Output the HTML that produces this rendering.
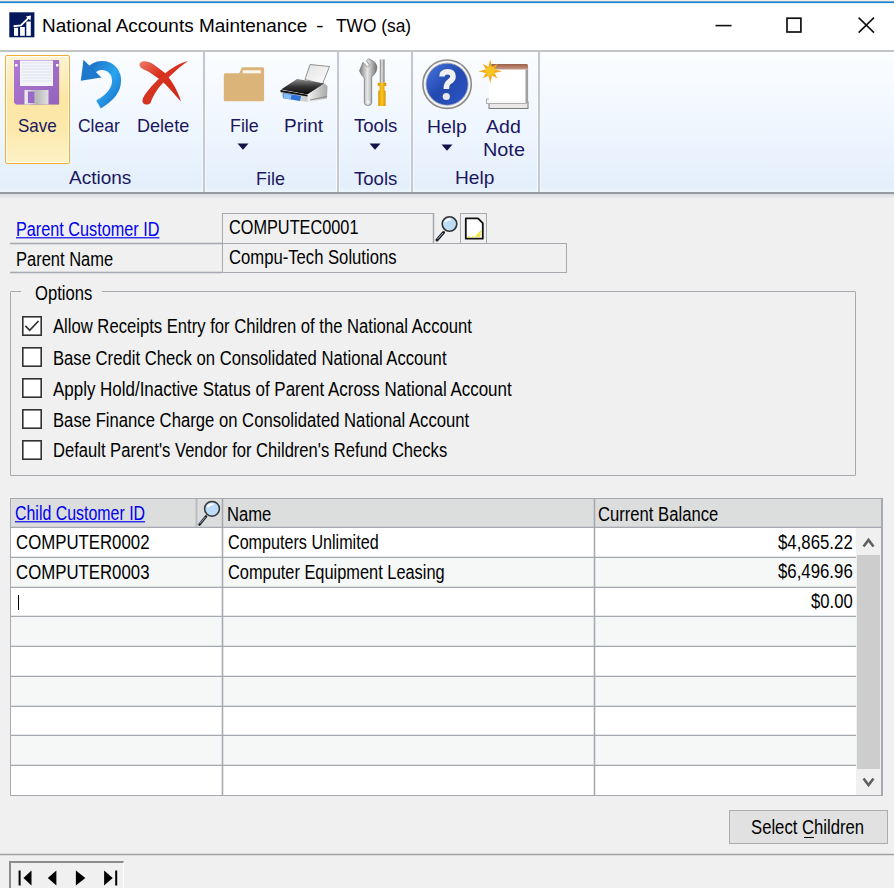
<!DOCTYPE html>
<html><head><meta charset="utf-8">
<style>
*{box-sizing:border-box;margin:0;padding:0}
html,body{width:894px;height:888px;overflow:hidden;background:#f0f0f0;font-family:"Liberation Sans",sans-serif;color:#000}
.a{position:absolute}
.t{position:absolute;white-space:pre;line-height:1;transform-origin:0 0}
#title{left:0;top:0;width:894px;height:50px;background:#fff}
#ribbon{left:0;top:50px;width:894px;height:144px;background:linear-gradient(#fbfdff 0%,#f6faff 25%,#edf5fe 60%,#e4effc 96%,#edf6fe 100%);border-top:2px solid #c0c3c8;border-bottom:2px solid #969ba1}
#rshadow{left:0;top:194px;width:894px;height:5px;background:linear-gradient(#d8dadd,#f0f0f0)}
.sep{position:absolute;top:52px;width:2px;height:140px;background:#c4c8d0;box-shadow:-1px 0 0 #f8fbff,1px 0 0 #f6faff}
.hl{position:absolute;height:1px;background:#a7a9b0;box-shadow:0 -1px 0 rgba(167,169,176,0.28),0 1px 0 rgba(167,169,176,0.28)}
.vl{position:absolute;width:1px;background:#a7a9b0;box-shadow:-1px 0 0 rgba(167,169,176,0.28),1px 0 0 rgba(167,169,176,0.28)}
.cb{position:absolute;left:22px;width:20px;height:20px;border:2px solid #333;background:#fff}
</style></head><body>
<div id="title" class="a">
  <div class="a" style="left:0;top:0;width:894px;height:1px;background:#f6eee0"></div>
  <div class="a" style="left:0;top:1px;width:894px;height:1px;background:#6aa8dc"></div><div class="a" style="left:0;top:2px;width:894px;height:1px;background:#1a84d8"></div><div class="a" style="left:0;top:3px;width:894px;height:1px;background:#e6f1fa"></div>
  <svg class="a" style="left:9px;top:12px" width="26" height="26" viewBox="0 0 26 26">
    <rect x="0.3" y="0.3" width="25.1" height="25" fill="#03175a"/>
    <rect x="5" y="15.8" width="4.1" height="8" fill="#fff"/>
    <rect x="11.1" y="15" width="4.7" height="8.8" fill="#fff"/>
    <rect x="17.3" y="9.5" width="4.5" height="14.3" fill="#fff"/>
    <path d="M4.6 14.2 L11.9 13.4 L19.8 5.6" stroke="#fff" stroke-width="1.9" fill="none"/>
    <path d="M22 3.4 L16.8 4.4 L21.5 8.6 Z" fill="#fff"/>
  </svg>
  <svg class="a" style="left:700px;top:0" width="194" height="50" viewBox="0 0 194 50">
  <path d="M15.5 25.6 H31.5" stroke="#111" stroke-width="1.6"/>
  <rect x="87" y="18.2" width="13.9" height="13.8" fill="none" stroke="#111" stroke-width="1.7"/>
  <path d="M158.6 17.6 L174 32.6 M174 17.6 L158.6 32.6" stroke="#111" stroke-width="1.6"/>
</svg>
  
  
</div>
<div id="ribbon" class="a"></div><div id="rshadow" class="a"></div>
<!-- Save highlighted -->
<div class="a" style="left:5px;top:55px;width:65px;height:109px;border:1px solid #f0ae38;border-radius:2px;box-shadow:inset 0 0 0 1px rgba(255,255,255,0.85);background:linear-gradient(#fdf3d2 0%,#fce6a2 40%,#fce9ad 70%,#fdf2c6 100%)"></div>
<div class="sep" style="left:203px"></div>
<div class="sep" style="left:337px"></div>
<div class="sep" style="left:411px"></div>
<div class="sep" style="left:537.5px"></div>


<!-- ribbon icons -->
<svg class="a" style="left:8px;top:54px" width="60" height="60" viewBox="0 0 60 60">
  <defs>
    <linearGradient id="flp" x1="0" y1="0" x2="1" y2="1"><stop offset="0" stop-color="#b07ad6"/><stop offset="1" stop-color="#9462bc"/></linearGradient>
    <linearGradient id="met" x1="0" y1="0" x2="1" y2="0"><stop offset="0" stop-color="#f0f0f0"/><stop offset="0.5" stop-color="#b8b8b8"/><stop offset="1" stop-color="#e0e0e0"/></linearGradient>
  </defs>
  <rect x="7.5" y="6.5" width="44" height="44" rx="1" fill="#000" opacity="0.15"/>
  <path d="M6 6 H51 V50.5 H8 L6 48.5 Z" fill="url(#flp)"/>
  <rect x="12" y="6.5" width="33" height="25.5" fill="#f3f5fa"/>
  <g stroke="#d8dde8" stroke-width="0.7"><line x1="14" y1="9" x2="44" y2="9"/><line x1="14" y1="12" x2="44" y2="12"/><line x1="14" y1="15" x2="44" y2="15"/><line x1="14" y1="18" x2="44" y2="18"/><line x1="14" y1="21" x2="44" y2="21"/><line x1="14" y1="24" x2="44" y2="24"/><line x1="14" y1="27" x2="44" y2="27"/></g>
  <rect x="16.5" y="36" width="24" height="14.5" fill="url(#met)"/>
  <rect x="20" y="37.5" width="6.5" height="11.5" fill="#9a68c8"/>
  <rect x="7" y="10" width="2.5" height="2.5" fill="#fff"/><rect x="48" y="10" width="2.5" height="2.5" fill="#fff"/>
</svg>
<svg class="a" style="left:74px;top:54px" width="60" height="60" viewBox="0 0 60 60">
  <defs><linearGradient id="blu" x1="0" y1="0" x2="1" y2="1"><stop offset="0" stop-color="#1f70c4"/><stop offset="0.55" stop-color="#2ba4ee"/><stop offset="1" stop-color="#1a74cc"/></linearGradient></defs>
  <path d="M14.4 21 A14.5 14.5 0 0 1 42.5 27 Q42.5 40 24.5 50.5" stroke="url(#blu)" stroke-width="9" fill="none"/>
  <path d="M9.5 5.7 L6.8 26.7 L27.4 23.6 Z" fill="#1e78cc"/>
</svg>
<svg class="a" style="left:134px;top:54px" width="60" height="60" viewBox="0 0 60 60">
  <defs><linearGradient id="red" x1="0" y1="0" x2="1" y2="1"><stop offset="0" stop-color="#ee7a68"/><stop offset="0.4" stop-color="#d8301c"/><stop offset="1" stop-color="#cc2a1a"/></linearGradient></defs>
  <path d="M5.5 10 C7 6 13 6.5 19 10 L31 19 C38 27 44 37 47 47.5 C40 40 33 31 26 25.5 L15 18 C10 15.5 5 14 5.5 10 Z" fill="url(#red)"/>
  <path d="M54 7 C45 9 36 15 28 22 C18 31 10 40 8.5 46 C8 50.5 13 52 16.5 49 C19 41 26 31 33 25 C41 17 48 11 54 7 Z" fill="#d63420"/>
</svg>
<svg class="a" style="left:216px;top:54px" width="60" height="60" viewBox="0 0 60 60">
  <path d="M23.3 19.3 L26 13.2 H46.5 Q48.1 13.2 48.1 14.8 V45.7 Q48.1 47.3 46.5 47.3 H9.4 Q7.8 47.3 7.8 45.7 V20.9 Q7.8 19.3 9.4 19.3 Z" fill="#dab478"/>
  <rect x="26.7" y="16.3" width="18.2" height="3" fill="#fbf6ee"/>
</svg>
<svg class="a" style="left:274px;top:54px" width="60" height="60" viewBox="0 0 60 60">
  <defs>
    <linearGradient id="pap" x1="0" y1="0" x2="1" y2="1"><stop offset="0" stop-color="#e2e2e2"/><stop offset="1" stop-color="#fdfdfd"/></linearGradient>
    <linearGradient id="ptop" x1="0" y1="0" x2="0" y2="1"><stop offset="0" stop-color="#8a8a8a"/><stop offset="0.5" stop-color="#333"/><stop offset="1" stop-color="#0a0a0a"/></linearGradient>
    <linearGradient id="pside" x1="0" y1="0" x2="1" y2="0"><stop offset="0" stop-color="#f4f4f4"/><stop offset="1" stop-color="#a8a8a8"/></linearGradient>
  </defs>
  <path d="M36 10.5 L55.5 12.5 L48.5 30 L31 25.5 Z" fill="url(#pap)" stroke="#888" stroke-width="0.9"/>
  <path d="M7 35.5 L23 25 L50.5 29.5 L33.5 40.5 Z" fill="url(#ptop)"/>
  <path d="M33.5 40.5 L50.5 29.5 L53.5 32 L53 44.5 L34 48 Z" fill="url(#pside)"/>
  <path d="M6 36 L33.5 40.5 L34 48 L9 44.5 Z" fill="#d0d0d0"/>
  <path d="M6.5 36 L33.5 40.8 L33.5 42.5 L6.5 38 Z" fill="#111"/>
  <path d="M9.5 39 L27 42 L26 47 L9 44 Z" fill="#2f72d8"/>
  <path d="M10 39.5 L17.5 40.8 L16.8 45.5 L9.5 44.2 Z" fill="#86bff5"/>
  <path d="M36 46 L52.5 42.5" stroke="#777" stroke-width="0.8"/>
</svg>
<svg class="a" style="left:344px;top:54px" width="60" height="60" viewBox="0 0 60 60">
  <defs>
    <linearGradient id="wr" x1="0" y1="0" x2="1" y2="0"><stop offset="0" stop-color="#7a7a7a"/><stop offset="0.45" stop-color="#e8e8e8"/><stop offset="1" stop-color="#707070"/></linearGradient>
    <linearGradient id="yl" x1="0" y1="0" x2="1" y2="0"><stop offset="0" stop-color="#d89000"/><stop offset="0.5" stop-color="#fcc820"/><stop offset="1" stop-color="#d08800"/></linearGradient>
  </defs>
  <path d="M20.3 24 V48.5 Q20.3 51.5 24 51.5 Q27.7 51.5 27.7 48.5 V23 Q33.2 18.5 33 13 Q32 7 24.5 5 L22.5 6.8 L25.5 11.2 L23.5 13.2 L19 8.3 L15.5 16.8 Q17 21 20.3 24 Z" fill="url(#wr)" stroke="#707070" stroke-width="0.7"/><rect x="22.6" y="46.5" width="2.8" height="3" rx="1.2" fill="#f0f0f0"/>
  <rect x="35.8" y="5.4" width="4.7" height="23.5" fill="url(#wr)"/>
  <path d="M33.8 28.7 H42.2 V32 H40.5 V36.5 H41.6 V52 H34.2 V36.5 H35.5 V32 H33.8 Z" fill="url(#yl)"/>
</svg>
<svg class="a" style="left:414px;top:54px" width="60" height="60" viewBox="0 0 60 60">
  <defs>
    <linearGradient id="hb" x1="0" y1="0" x2="1" y2="1"><stop offset="0" stop-color="#4678e0"/><stop offset="0.5" stop-color="#2448b0"/><stop offset="1" stop-color="#2c58c8"/></linearGradient>
  </defs>
  <circle cx="33.1" cy="30.2" r="24.2" fill="#f4f4f4" stroke="#8a8a8a" stroke-width="1.6"/>
  <circle cx="33.1" cy="30.2" r="21" fill="url(#hb)" stroke="#9aa0b0" stroke-width="0.8"/>
  <path d="M28 22.5 Q28 17.8 33.8 17.8 Q39 17.8 39 22.5 Q39 25.5 35.5 27.5 Q32.3 29.5 32.3 35" stroke="#f0f0f0" stroke-width="5.6" fill="none"/>
  <circle cx="32.3" cy="42.5" r="3.6" fill="#e8e8e8"/>
</svg>
<svg class="a" style="left:472px;top:54px" width="60" height="60" viewBox="0 0 60 60">
  <defs><linearGradient id="br" x1="0" y1="0" x2="0" y2="1"><stop offset="0" stop-color="#9c6048"/><stop offset="1" stop-color="#c89a88"/></linearGradient></defs>
  <rect x="17" y="48" width="39" height="6.5" fill="#e8e8e8" stroke="#7a7a7a" stroke-width="1"/>
  <rect x="14.5" y="45" width="40" height="4.5" fill="#f8f8f8" stroke="#a0a0a0" stroke-width="0.8"/>
  <rect x="17" y="15.5" width="37" height="31" fill="#fff"/>
  <rect x="53.5" y="15.5" width="2.6" height="33" fill="#a0a0a0"/>
  <path d="M17 10.1 H54.5 Q56.1 10.1 56.1 12 V15.5 H17 Z" fill="url(#br)"/>
  <g transform="translate(18.2 17.2)" fill="#f2a81a"><path d="M0.00 -12.00 L1.76 -4.25 L7.42 -7.42 L4.25 -1.76 L12.00 0.00 L4.25 1.76 L7.42 7.42 L1.76 4.25 L0.00 12.00 L-1.76 4.25 L-7.42 7.42 L-4.25 1.76 L-12.00 0.00 L-4.25 -1.76 L-7.42 -7.42 L-1.76 -4.25 Z"/><circle r="4.8" fill="#fac41e"/></g>
</svg>

<svg class="a" style="left:237px;top:143px" width="12" height="7" viewBox="0 0 12 7"><path d="M0.5 0.5 H11.5 L6 6.8 Z" fill="#15124a"/></svg>
<svg class="a" style="left:369px;top:143px" width="12" height="7" viewBox="0 0 12 7"><path d="M0.5 0.5 H11.5 L6 6.8 Z" fill="#15124a"/></svg>
<svg class="a" style="left:440.5px;top:143.5px" width="12" height="7" viewBox="0 0 12 7"><path d="M0.5 0.5 H11.5 L6 6.8 Z" fill="#15124a"/></svg>
<!-- lookup/note buttons -->
<div class="vl" style="left:433px;top:213px;height:30px"></div>
<div class="a" style="left:460px;top:213px;width:27px;height:30px;border:1px solid #a7a9b0;border-bottom:none"></div>
<svg class="a" style="left:434px;top:214px" width="26" height="28" viewBox="0 0 26 28">
  <path d="M3 26 L9.5 18.5" stroke="#222" stroke-width="3" stroke-linecap="round"/>
  <path d="M3.5 25 L9 19" stroke="#8ab0e0" stroke-width="1"/>
  <circle cx="15.5" cy="10" r="7.3" fill="#bcdcf8" stroke="#333" stroke-width="1.6"/>
  <path d="M11 8 Q13 5 17 5.5" stroke="#fff" stroke-width="1.8" fill="none"/>
</svg>
<svg class="a" style="left:462px;top:215px" width="24" height="26" viewBox="0 0 24 26">
  <path d="M3.8 3.4 H16 L20.8 8.2 V23.7 H3.8 Z" fill="#fff" stroke="#111" stroke-width="1.8" stroke-linejoin="round"/>
  <path d="M6 22 H8 M10 22 H12 M14 22 L19 16 M16 22 L19 19" stroke="#f0e020" stroke-width="1.4"/>
</svg>

<!-- form -->
<div class="hl" style="left:10px;top:243px;width:212px"></div>
<div class="hl" style="left:10px;top:272px;width:212px"></div>
<div class="a" style="left:222px;top:213px;width:212px;height:30px;border:1px solid #a7a9b0;border-bottom:none"></div>
<div class="a" style="left:222px;top:243px;width:345px;height:30px;border:1px solid #a7a9b0"></div>

<!-- options -->
<div class="a" style="left:10px;top:291px;width:846px;height:185px;border:1px solid #a7a9b0;border-radius:1px"></div>
<div class="a" style="left:21px;top:285px;width:81px;height:12px;background:#f0f0f0"></div>
<svg class="a" style="left:22px;top:316px" width="20" height="20" viewBox="0 0 20 20"><rect x="0.8" y="0.8" width="18.4" height="18.4" fill="#fff" stroke="#333" stroke-width="1.6"/></svg>
<svg class="a" style="left:22px;top:347px" width="20" height="20" viewBox="0 0 20 20"><rect x="0.8" y="0.8" width="18.4" height="18.4" fill="#fff" stroke="#333" stroke-width="1.6"/></svg>
<svg class="a" style="left:22px;top:378px" width="20" height="20" viewBox="0 0 20 20"><rect x="0.8" y="0.8" width="18.4" height="18.4" fill="#fff" stroke="#333" stroke-width="1.6"/></svg>
<svg class="a" style="left:22px;top:409px" width="20" height="20" viewBox="0 0 20 20"><rect x="0.8" y="0.8" width="18.4" height="18.4" fill="#fff" stroke="#333" stroke-width="1.6"/></svg>
<svg class="a" style="left:22px;top:440px" width="20" height="20" viewBox="0 0 20 20"><rect x="0.8" y="0.8" width="18.4" height="18.4" fill="#fff" stroke="#333" stroke-width="1.6"/></svg>
<svg class="a" style="left:22px;top:316px" width="20" height="20" viewBox="0 0 20 20"><path d="M3.4 9.9 L7.7 14.3 L16.5 5" stroke="#333" stroke-width="1.8" fill="none"/></svg>

<!-- grid -->
<div class="a" style="left:10px;top:498px;width:873px;height:298px;background:#fff;border:1px solid #a7a9b0;border-right:2px solid #a7a9b0;border-bottom:2px solid #a7a9b0"></div>
<div class="a" style="left:11px;top:499px;width:870px;height:28px;background:#dcdddd"></div>
<div class="hl" style="left:11px;top:527px;width:870px"></div>
<div class="a" style="left:11px;top:528px;width:845px;height:29px;background:#fff"></div>
<div class="hl" style="left:11px;top:557px;width:845px"></div>
<div class="a" style="left:11px;top:558px;width:845px;height:29px;background:#f6f8f8"></div>
<div class="hl" style="left:11px;top:587px;width:845px"></div>
<div class="a" style="left:11px;top:588px;width:845px;height:28px;background:#fff"></div>
<div class="hl" style="left:11px;top:616px;width:845px"></div>
<div class="a" style="left:11px;top:617px;width:845px;height:29px;background:#f6f8f8"></div>
<div class="hl" style="left:11px;top:646px;width:845px"></div>
<div class="a" style="left:11px;top:647px;width:845px;height:29px;background:#fff"></div>
<div class="hl" style="left:11px;top:676px;width:845px"></div>
<div class="a" style="left:11px;top:677px;width:845px;height:29px;background:#f6f8f8"></div>
<div class="hl" style="left:11px;top:706px;width:845px"></div>
<div class="a" style="left:11px;top:707px;width:845px;height:28px;background:#fff"></div>
<div class="hl" style="left:11px;top:735px;width:845px"></div>
<div class="a" style="left:11px;top:736px;width:845px;height:29px;background:#f6f8f8"></div>
<div class="hl" style="left:11px;top:765px;width:845px"></div>
<div class="a" style="left:11px;top:766px;width:845px;height:29px;background:#fff"></div>
<div class="vl" style="left:222px;top:499px;height:296px"></div>
<div class="vl" style="left:594px;top:499px;height:296px"></div>
<div class="vl" style="left:196px;top:499px;height:28px;background:#b8b9bc"></div>
<div class="a" style="left:856px;top:528px;width:25px;height:267px;background:#f0f0f0"></div>
<div class="a" style="left:857px;top:555px;width:23px;height:214px;background:#cdcdcd"></div>
<svg class="a" style="left:862px;top:537px" width="13" height="11" viewBox="0 0 13 11"><path d="M1.5 9.5 L6.5 3 L11.5 9.5" stroke="#606060" stroke-width="2.6" fill="none"/></svg>
<svg class="a" style="left:862px;top:777px" width="13" height="11" viewBox="0 0 13 11"><path d="M1.5 1.5 L6.5 8 L11.5 1.5" stroke="#606060" stroke-width="2.6" fill="none"/></svg>
<div class="a" style="left:18px;top:595px;width:1px;height:15px;background:#000"></div>


<svg class="a" style="left:196px;top:499px" width="26" height="28" viewBox="0 0 26 28">
  <path d="M3.5 25.5 L10 17.5" stroke="#222" stroke-width="2.6" stroke-linecap="round"/>
  <path d="M4 24.5 L9.5 18" stroke="#8ab0e0" stroke-width="0.9"/>
  <circle cx="16" cy="9.8" r="7.4" fill="#bcdcf8" stroke="#333" stroke-width="1.5"/>
  <path d="M11.5 8 Q13.5 5 17.5 5.5" stroke="#fff" stroke-width="1.8" fill="none"/>
</svg>
<!-- nav -->
<div class="a" style="left:9px;top:861px;width:115px;height:27px;border-top:2px solid #8c8c8c;border-left:2px solid #8c8c8c;border-right:1px solid #fff"></div>
<svg class="a" style="left:10px;top:862px" width="114" height="26" viewBox="0 0 114 26">
  <rect x="8.6" y="8.5" width="2" height="15" fill="#000"/>
  <path d="M21.5 8.5 V23.5 L13.5 16 Z" fill="#000"/>
  <path d="M46.4 8.5 V23.5 L37.8 16 Z" fill="#000"/>
  <path d="M65.9 8.5 V23.5 L75.3 16 Z" fill="#000"/>
  <path d="M94.1 8.5 V23.5 L102.7 16 Z" fill="#000"/>
  <rect x="105.2" y="8.5" width="2" height="15" fill="#000"/>
</svg>
<!-- bottom -->
<div class="a" style="left:729px;top:810px;width:159px;height:34px;border:1px solid #adadad;background:#e1e1e1"></div>
<div class="a" style="left:804px;top:837px;width:10px;height:1px;background:#000"></div>
<div class="hl" style="left:0;top:854px;width:894px;background:#a0a0a0"></div>

<div class="t" style="left:42.29px;top:17.02px;font-size:17px;color:#000;transform:scale(1.1143,1.0882);">National Accounts Maintenance</div>
<div class="t" style="left:316.25px;top:17.02px;font-size:17px;color:#000;transform:scale(1.3500,1.0882);">-</div>
<div class="t" style="left:336.00px;top:17.02px;font-size:17px;color:#000;transform:scale(1.0192,1.0882);">TWO (sa)</div>
<div class="t" style="left:18.40px;top:116.44px;font-size:17px;color:#1b1760;transform:scale(1.0027,1.1294);">Save</div>
<div class="t" style="left:77.87px;top:116.44px;font-size:17px;color:#1b1760;transform:scale(1.0275,1.1294);">Clear</div>
<div class="t" style="left:136.94px;top:116.44px;font-size:17px;color:#1b1760;transform:scale(1.0625,1.1294);">Delete</div>
<div class="t" style="left:229.65px;top:116.44px;font-size:17px;color:#1b1760;transform:scale(1.0500,1.1294);">File</div>
<div class="t" style="left:284.38px;top:116.44px;font-size:17px;color:#1b1760;transform:scale(1.1176,1.1294);">Print</div>
<div class="t" style="left:354.00px;top:116.44px;font-size:17px;color:#1b1760;transform:scale(1.0923,1.1294);">Tools</div>
<div class="t" style="left:426.56px;top:116.74px;font-size:17px;color:#1b1760;transform:scale(1.1394,1.1294);">Help</div>
<div class="t" style="left:486.30px;top:116.74px;font-size:17px;color:#1b1760;transform:scale(1.1483,1.1294);">Add</div>
<div class="t" style="left:482.63px;top:140.14px;font-size:17px;color:#1b1760;transform:scale(1.1676,1.1294);">Note</div>
<div class="t" style="left:69.30px;top:168.34px;font-size:17px;color:#1b1760;transform:scale(1.1182,1.1294);">Actions</div>
<div class="t" style="left:255.95px;top:168.74px;font-size:17px;color:#1b1760;transform:scale(1.0538,1.1294);">File</div>
<div class="t" style="left:354.00px;top:168.74px;font-size:17px;color:#1b1760;transform:scale(1.0923,1.1294);">Tools</div>
<div class="t" style="left:454.67px;top:168.14px;font-size:17px;color:#1b1760;transform:scale(1.1273,1.1294);">Help</div>
<div class="t" style="left:15.80px;top:220.41px;font-size:17px;color:#0000f0;transform:scale(0.9547,1.1471);text-decoration:underline">Parent Customer ID</div>
<div class="t" style="left:15.73px;top:249.71px;font-size:17px;color:#000;transform:scale(0.9697,1.1471);">Parent Name</div>
<div class="t" style="left:229.44px;top:218.01px;font-size:17px;color:#000;transform:scale(0.9582,1.1471);">COMPUTEC0001</div>
<div class="t" style="left:229.42px;top:248.21px;font-size:17px;color:#000;transform:scale(0.9794,1.1471);">Compu-Tech Solutions</div>
<div class="t" style="left:34.52px;top:284.31px;font-size:17px;color:#000;transform:scale(0.9772,1.1471);">Options</div>
<div class="t" style="left:53.00px;top:317.11px;font-size:17px;color:#000;transform:scale(0.9785,1.1471);">Allow Receipts Entry for Children of the National Account</div>
<div class="t" style="left:53.22px;top:348.51px;font-size:17px;color:#000;transform:scale(0.9798,1.1471);">Base Credit Check on Consolidated National Account</div>
<div class="t" style="left:53.00px;top:379.71px;font-size:17px;color:#000;transform:scale(0.9967,1.1471);">Apply Hold/Inactive Status of Parent Across National Account</div>
<div class="t" style="left:53.22px;top:410.51px;font-size:17px;color:#000;transform:scale(0.9809,1.1471);">Base Finance Charge on Consolidated National Account</div>
<div class="t" style="left:53.23px;top:440.61px;font-size:17px;color:#000;transform:scale(0.9749,1.1471);">Default Parent's Vendor for Children's Refund Checks</div>
<div class="t" style="left:14.80px;top:504.31px;font-size:17px;color:#0000f0;transform:scale(0.9367,1.1471);text-decoration:underline">Child Customer ID</div>
<div class="t" style="left:226.52px;top:505.11px;font-size:17px;color:#000;transform:scale(0.9773,1.1471);">Name</div>
<div class="t" style="left:598.22px;top:505.01px;font-size:17px;color:#000;transform:scale(0.9785,1.1471);">Current Balance</div>
<div class="t" style="left:15.61px;top:533.31px;font-size:17px;color:#000;transform:scale(0.9881,1.1471);">COMPUTER0002</div>
<div class="t" style="left:15.61px;top:562.81px;font-size:17px;color:#000;transform:scale(0.9881,1.1471);">COMPUTER0003</div>
<div class="t" style="left:228.45px;top:533.31px;font-size:17px;color:#000;transform:scale(0.9490,1.1471);">Computers Unlimited</div>
<div class="t" style="left:228.44px;top:562.81px;font-size:17px;color:#000;transform:scale(0.9632,1.1471);">Computer Equipment Leasing</div>
<div class="t" style="left:777.90px;top:533.01px;font-size:17px;color:#000;transform:scale(0.9880,1.1471);">$4,865.22</div>
<div class="t" style="left:777.90px;top:561.61px;font-size:17px;color:#000;transform:scale(0.9880,1.1471);">$6,496.96</div>
<div class="t" style="left:810.90px;top:592.11px;font-size:17px;color:#000;transform:scale(0.9786,1.1471);">$0.00</div>
<div class="t" style="left:751.42px;top:817.71px;font-size:17px;color:#000;transform:scale(0.9814,1.1471);">Select Children</div>
</body></html>
